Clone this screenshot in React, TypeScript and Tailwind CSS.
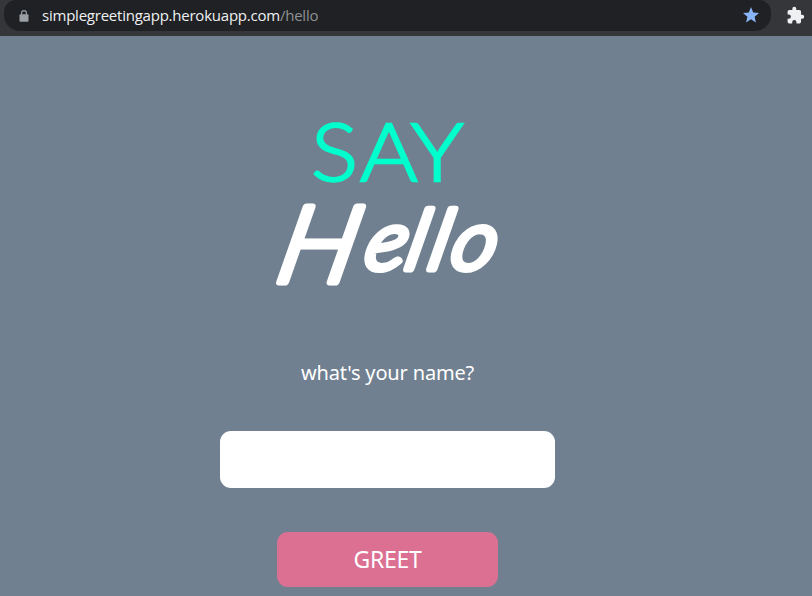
import React from "react";

function AddressBar() {
  return (
    <header className="flex h-9 items-start bg-[#35363a]">
      <div className="ml-1 flex h-[31px] w-[767px] items-center rounded-b-2xl rounded-t-xl bg-[#202124] pl-[15px] pr-3">
        <svg className="h-3 w-[10px] shrink-0" viewBox="0 0 10 12" fill="none">
          <rect x="0.5" y="4.2" width="9" height="7.6" rx="1" fill="#9aa0a6" />
          <path d="M2.6 4.5V3a2.4 2.4 0 0 1 4.8 0v1.5" stroke="#9aa0a6" strokeWidth="1.2" />
        </svg>
        <p className="mb-[2px] ml-[13px] whitespace-nowrap font-['Open_Sans',sans-serif] text-[15px] leading-5 tracking-[-0.23px] text-[#eff0f2]">
          simplegreetingapp.herokuapp.com<span className="text-[#8e9196]">/hello</span>
        </p>
        <svg className="mb-px ml-auto h-4 w-4 shrink-0" viewBox="0 0 16 16" fill="#8ab4f8">
          <path d="M8 0l2.200 5.400 5.800.5-4.400 3.800 1.300 5.700L8 12.300l-4.900 3.100 1.300-5.700L0 5.900l5.800-.5z" />
        </svg>
      </div>
      <svg className="ml-[15px] mt-[6px] h-[19px] w-[19px] shrink-0" viewBox="0 0 24 24" fill="#eff0f2">
        <path d="M20.500 11H19V7a2 2 0 0 0-2-2h-4V3.500a2.500 2.500 0 0 0-5 0V5H4a2 2 0 0 0-1.990 2v3.800H3.500a2.700 2.700 0 0 1 0 5.400H2V20a2 2 0 0 0 2 2h3.800v-1.500a2.700 2.700 0 0 1 5.400 0V22H17a2 2 0 0 0 2-2v-4h1.500a2.500 2.500 0 0 0 0-5z" />
      </svg>
    </header>
  );
}

function Wordmark() {
  return (
    <h1 className="flex h-[190px] w-[240px] flex-col items-center">
      <svg className="h-[190px] w-[240px] overflow-visible" viewBox="0 0 240 190">
        <text
          transform="translate(43 81.500) scale(1.100 1)"
          x="0 44.500 91"
          strokeWidth="2.300"
          className="fill-[#00ffcc] stroke-[#00ffcc] font-['Lato',sans-serif] text-[80px] font-light"
        >
          SAY
        </text>
        <text
          transform="translate(-9 175) scale(1.050 1) skewX(-12)"
          strokeWidth="7"
          strokeLinejoin="round"
          className="fill-white stroke-white font-['Lato',cursive] font-light italic"
        >
          <tspan x="15" y="8" fontSize="106">H</tspan>
          <tspan x="97 136 158 179" y="-5" fontSize="82">ello</tspan>
        </text>
      </svg>
    </h1>
  );
}

export default function App() {
  return (
    <div className="flex h-[596px] w-[812px] flex-col overflow-hidden bg-[#708090]">
      <AddressBar />
      <main className="flex w-[775px] flex-col items-center pt-[63px]">
        <Wordmark />
        <label htmlFor="name" className="mt-[69px] whitespace-nowrap font-['Noto_Sans',sans-serif] text-[20px] leading-[30px] tracking-[-0.160px] text-white">
          what's your name?
        </label>
        <input id="name" className="mt-[42.500px] h-[57.500px] w-[335px] rounded-[11px] bg-white px-4 text-xl outline-none" />
        <button className="mt-[43.500px] h-[55px] w-[221px] rounded-[11px] bg-[#db7093] font-['Noto_Sans',sans-serif] text-[23px] tracking-[-0.300px] text-white">
          GREET
        </button>
      </main>
    </div>
  );
}
